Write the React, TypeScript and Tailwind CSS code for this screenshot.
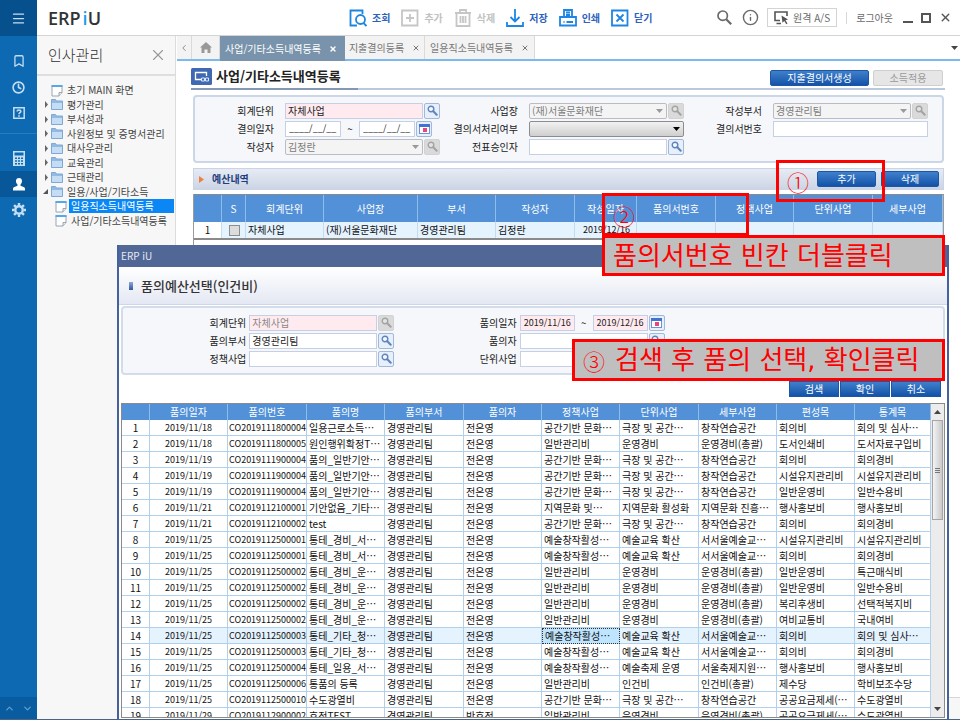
import React from "react";
import { Bookmark, Clock, Menu, X, Info, ChevronUp, ChevronDown, ChevronLeft } from "lucide-react";

/* ---------- icons ---------- */

function FolderIcon() {
  return (
    <svg width="12" height="11" viewBox="0 0 12 11" className="shrink-0" aria-hidden="true">
      <path d="M.5 10.500V.5h4l1 1.500h6v8.500z" fill="#8fbbe6" stroke="#7fa9d2" />
      <path d="M1 4h10v6H1z" fill="#c4ddf5" />
    </svg>
  );
}

function PageIcon() {
  return (
    <svg width="12" height="13" viewBox="0 0 12 13" className="shrink-0" aria-hidden="true">
      <path d="M1 1.500h10v7L8 12H1z" fill="#fff" stroke="#9aa4b0" />
      <path d="M.5 1h11v2H.5z" fill="#5aa7e6" />
      <path d="M11 8.500H8V12" fill="#e8ebef" stroke="#9aa4b0" />
    </svg>
  );
}

function LensIcon({ muted }: { muted?: boolean }) {
  const c = muted ? "#a3a3a3" : "#5f83bd";
  return (
    <svg width="11" height="11" viewBox="0 0 11 11" aria-hidden="true">
      <circle cx="4" cy="4" r="2.800" fill={muted ? "#e3e3e3" : "#f4f9ff"} stroke={c} strokeWidth="1.400" />
      <path d="M6.300 6.300L9.700 9.700" stroke={c} strokeWidth="2" strokeLinecap="round" />
    </svg>
  );
}

function CalendarIcon() {
  return (
    <svg width="11" height="10" viewBox="0 0 11 10" aria-hidden="true">
      <rect x=".5" y=".5" width="10" height="9" fill="#fff" stroke="#6f93d2" />
      <rect x="0" y="0" width="11" height="3" fill="#3f74d0" />
      <rect x="4" y="4" width="4" height="4" fill="#e8467c" />
    </svg>
  );
}

function Caret({ className }: { className: string }) {
  return (
    <svg width="7" height="4" viewBox="0 0 7 4" className={className} aria-hidden="true">
      <path d="M0 0h7L3.500 4z" fill="currentColor" />
    </svg>
  );
}

const toolIcons: Record<string, React.ReactNode> = {
  조회: (
    <>
      <path d="M8 16.500H1.500v-15h12V5" />
      <circle cx="11.500" cy="10.500" r="4.500" />
      <path d="M14.500 14l3 3" />
    </>
  ),
  추가: (
    <>
      <path d="M1 1.500h15.500v15H1z" />
      <path d="M9 5v8M5 9h8" />
    </>
  ),
  삭제: (
    <>
      <path d="M1 4h16M6 4V1h6v3M2.500 4v13h13V4M6.500 7v7M9 7v7M11.500 7v7" />
    </>
  ),
  저장: (
    <>
      <path d="M9 0v12M4.500 8L9 12.500 13.500 8M1 13v4h16v-4" />
    </>
  ),
  인쇄: (
    <>
      <path d="M5 8V1h8v7M1 8h16v8.500H1zM7 3.500h4M7 6h4M4.500 13h1M7.500 13H14" />
    </>
  ),
  닫기: (
    <>
      <path d="M1 1.500h15.500v15H1zM5.500 5.500l7 7M12.500 5.500l-7 7" />
    </>
  ),
};

/* ---------- shared controls ---------- */

function BlueButton({ children, className }: { children: React.ReactNode; className: string }) {
  return (
    <button
      type="button"
      className={
        "flex h-4 items-center justify-center border border-[#1d56a4] bg-linear-to-b from-[#3f80cc] to-[#1353a8] text-white " +
        className
      }
    >
      {children}
    </button>
  );
}

function SquareButton({ label, muted, children }: { label: string; muted?: boolean; children: React.ReactNode }) {
  return (
    <button
      type="button"
      aria-label={label}
      disabled={muted}
      className={
        "flex size-4 shrink-0 items-center justify-center rounded-xs border " +
        (muted ? "border-[#d2d2d2] bg-[#dadada]" : "border-[#9fb8dc] bg-[#e6effa]")
      }
    >
      {children}
    </button>
  );
}

function Field({
  id,
  label,
  gap,
  width,
  children,
}: {
  id: string;
  label: string;
  gap: string;
  width: string;
  children: React.ReactNode;
}) {
  return (
    <div className="flex h-[17px] items-center">
      <label htmlFor={id} className={"flex-1 text-right text-[#222] " + gap}>
        {label}
      </label>
      <div className={"flex items-center gap-px " + width}>{children}</div>
    </div>
  );
}

const inputBase = "h-4 min-w-0 border border-[#c5d0e6] leading-none";

function LookupInput({
  id,
  value = "",
  tone = "bg-white text-[#222]",
  muted,
}: {
  id: string;
  value?: string;
  tone?: string;
  muted?: boolean;
}) {
  return (
    <>
      <input id={id} defaultValue={value} className={inputBase + " flex-1 pl-0.5 " + tone} />
      <SquareButton label="찾기" muted={muted}>
        <LensIcon muted={muted} />
      </SquareButton>
    </>
  );
}

function DateRange({ id, from, to, tone }: { id: string; from: string; to: string; tone: string }) {
  const date = inputBase + " w-14 pl-[3px] text-[9px] text-[#222] " + tone;
  return (
    <>
      <input id={id} defaultValue={from} className={date} />
      <span className="w-4 text-center">~</span>
      <input aria-label="종료일자" defaultValue={to} className={date} />
      <SquareButton label="달력">
        <CalendarIcon />
      </SquareButton>
    </>
  );
}

function Combo({ id, value, box, caret }: { id: string; value: string; box: string; caret: string }) {
  return (
    <div className="relative flex-1">
      <select id={id} className={"block h-4 w-full appearance-none rounded-xs border pl-0.5 leading-none " + box}>
        <option>{value}</option>
      </select>
      <Caret className={"pointer-events-none absolute top-1.5 right-1 " + caret} />
    </div>
  );
}

function MutedCombo({ id, value }: { id: string; value: string }) {
  return (
    <>
      <Combo id={id} value={value} box="border-[#b9bcc2] bg-[#f4f4f4] text-[#7c7c7c]" caret="text-[#9a9a9a]" />
      <SquareButton label="찾기" muted>
        <LensIcon muted />
      </SquareButton>
    </>
  );
}

/* ---------- left rail and menu tree ---------- */

function Rail() {
  const item = "flex h-[26px] w-full items-center justify-center";
  return (
    <nav className="flex w-[37px] shrink-0 flex-col bg-[#0c69b2] text-[#c4def2]">
      <button type="button" aria-label="메뉴" className="flex h-9 items-center justify-center bg-[#06508d]">
        <Menu size={15} strokeWidth={2} />
      </button>
      <div className="mt-3 border-b border-[#2a7cbe] pb-[7px]">
        <button type="button" aria-label="즐겨찾기" className={item}>
          <Bookmark size={14} strokeWidth={2.2} />
        </button>
        <button type="button" aria-label="최근" className={item}>
          <Clock size={13} strokeWidth={3} />
        </button>
        <button type="button" aria-label="도움말" className={item}>
          <svg width="12" height="12" viewBox="0 0 12 12" fill="none" stroke="currentColor" aria-hidden="true">
            <path d="M.8.800h10.400v10.400H.8z" strokeWidth="1.500" />
            <path d="M4.200 4.600c0-2.200 3.600-2.200 3.600 0 0 1.200-1.800 1-1.800 2.600M6 8.300v1.400" strokeWidth="1.600" />
          </svg>
        </button>
      </div>
      <div className="pt-[11px]">
        <button type="button" aria-label="회계" className={item}>
          <svg width="12" height="15" viewBox="0 0 12 15" aria-hidden="true">
            <path
              fillRule="evenodd"
              fill="currentColor"
              d="M0 0h12v15H0zM1.500 1.500v3h9v-3zM2 6.500v1.500h2V6.500zm3 0v1.500h2V6.500zm3 0v1.500h2V6.500zM2 9.300v1.500h2V9.300zm3 0v1.500h2V9.300zm3 0v1.500h2V9.300zM2 12v1.500h2V12zm3 0v1.500h2V12zm3 0v1.500h2V12z"
            />
          </svg>
        </button>
        <button type="button" aria-label="인사" className={item + " bg-[#085899] text-white"}>
          <svg width="12" height="13" viewBox="0 0 12 13" fill="currentColor" aria-hidden="true">
            <path d="M6 0c4 0 3.500 5 1.500 6.500v1.300l3.700 1.500c.6.300.8.900.8 1.700v1.500H0V11c0-.8.2-1.400.8-1.700l3.700-1.500V6.500C2.500 5 2 0 6 0z" />
          </svg>
        </button>
        <button type="button" aria-label="설정" className={item}>
          <svg width="14" height="14" viewBox="0 0 14 14" fill="none" stroke="currentColor" aria-hidden="true">
            <circle cx="7" cy="7" r="3.700" strokeWidth="2.400" />
            <path
              d="M7 0v2.500M7 11.500V14M0 7h2.500M11.500 7H14M2.050 2.050l1.800 1.800M10.150 10.150l1.800 1.800M2.050 11.950l1.800-1.800M10.150 3.850l1.800-1.800"
              strokeWidth="2.400"
            />
          </svg>
        </button>
      </div>
      <div className="mt-auto flex h-[22px] items-center justify-around bg-[#085c9f] text-[#5c9dd0]">
        <ChevronUp size={11} strokeWidth={3} />
        <ChevronDown size={11} strokeWidth={3} />
      </div>
    </nav>
  );
}

const folders = ["평가관리", "부서성과", "사원정보 및 증명서관리", "대사우관리", "교육관리", "근태관리"];

function Sidebar() {
  const row = "flex items-center whitespace-nowrap";
  return (
    <aside className="w-[139px] shrink-0 border-r border-[#dcdcdc] bg-[#f7f7f7] text-[#444]">
      <div className="flex h-10 items-center justify-between border-b-2 border-[#dedede] pr-2 pl-[11px]">
        <h1 className="text-[15px] font-light text-[#333]">인사관리</h1>
        <button type="button" aria-label="닫기">
          <X size={18} strokeWidth={1.5} className="text-[#999]" />
        </button>
      </div>
      <ul className="mt-[7px] grid h-[145px] auto-rows-fr pl-1.5">
        <li className={row + " gap-1 pl-2"}>
          <PageIcon />
          초기 MAIN 화면
        </li>
        {folders.map((name) => (
          <li key={name} className={row}>
            <svg width="8" height="7" viewBox="0 0 8 7" className="shrink-0" aria-hidden="true">
              <path d="M2 0l3 3.500L2 7z" fill="#666" />
            </svg>
            <span className="flex items-center gap-1">
              <FolderIcon />
              {name}
            </span>
          </li>
        ))}
        <li className={row}>
          <svg width="8" height="7" viewBox="0 0 8 7" className="shrink-0" aria-hidden="true">
            <path d="M5 1v5H0z" fill="#555" />
          </svg>
          <span className="flex items-center gap-1">
            <FolderIcon />
            일용/사업/기타소득
          </span>
        </li>
        <li className={row + " pl-3"}>
          <PageIcon />
          <span className="mr-px ml-0.5 flex-1 bg-[#0a86f5] pl-0.5 leading-[14px] text-white">일용직소득내역등록</span>
        </li>
        <li className={row + " gap-1 pl-3"}>
          <PageIcon />
          사업/기타소득내역등록
        </li>
      </ul>
    </aside>
  );
}

/* ---------- top bar and tabs ---------- */

function TopBar() {
  const muted = ["추가", "삭제"];
  return (
    <header className="flex h-9 shrink-0 items-center border-b border-[#d4d4d4] bg-white">
      <div className="w-[312px] shrink-0 pl-[11px] font-['Open_Sans',sans-serif] text-lg font-semibold text-[#333]">
        ERP<span className="ml-0.5 text-[#18a0ee]">i</span>U
      </div>
      <div className="flex items-center gap-[11px] font-bold">
        {Object.entries(toolIcons).map(([name, icon]) => (
          <button
            key={name}
            type="button"
            className={
              "flex shrink-0 items-center gap-[5px] " + (muted.includes(name) ? "text-[#c2c2c2]" : "text-[#2f62bd]")
            }
          >
            <svg
              width="18"
              height="18"
              viewBox="0 0 18 18"
              fill="none"
              stroke={muted.includes(name) ? "#c6c6c6" : "#1c86e2"}
              strokeWidth="1.800"
              aria-hidden="true"
            >
              {icon}
            </svg>
            {name}
          </button>
        ))}
      </div>
      <div className="ml-auto flex items-center pr-2 text-[#6a6a6a]">
        <button type="button" aria-label="검색" className="mr-2.5">
          <svg width="15" height="15" viewBox="0 0 15 15" fill="none" stroke="currentColor" aria-hidden="true">
            <circle cx="5.700" cy="5.700" r="4.700" strokeWidth="1.700" />
            <path d="M9.200 9.200l5 5" strokeWidth="2.200" />
          </svg>
        </button>
        <button type="button" aria-label="정보" className="mr-2">
          <Info size={17} strokeWidth={2} />
        </button>
        <button type="button" className="flex h-[19px] w-[70px] items-center justify-center gap-1 border border-[#d4d4d4]">
          <svg width="15" height="14" viewBox="0 0 15 14" fill="none" stroke="#555" strokeWidth="1.600" aria-hidden="true">
            <path d="M6 9.500H1V1h12v4M2.500 12.500H7" />
            <path d="M7.500 4.500l6.500 4-2.500.7 2 3.300-1.200.7-2-3.300-1.800 1.800z" fill="#555" stroke="none" />
          </svg>
          원격 A/S
        </button>
        <span className="mx-[9px] h-3 w-px bg-[#d8d8d8]" />
        <button type="button">로그아웃</button>
        <button type="button" aria-label="최소화" className="ml-2.5 flex h-2.5 items-end">
          <span className="h-0.5 w-2.5 bg-[#555]" />
        </button>
        <button type="button" aria-label="최대화" className="mr-2 ml-2 h-2.5 w-2.5 border-2 border-[#555]" />
        <button type="button" aria-label="창 닫기">
          <X size={13} strokeWidth={2.6} className="text-[#555]" />
        </button>
      </div>
    </header>
  );
}

function Tabs() {
  const cell = "flex items-center justify-center border-r border-[#dadada] bg-[#f3f3f3]";
  return (
    <div className="flex h-[25px] shrink-0 border-b-2 border-[#7cb9ec] text-[#777]">
      <button type="button" aria-label="이전" className={cell + " w-[15px]"}>
        <ChevronLeft size={10} />
      </button>
      <button type="button" aria-label="홈" className={cell + " w-[28px]"}>
        <svg width="12" height="11" viewBox="0 0 12 11" aria-hidden="true">
          <path d="M6 0l6 5.500h-1.500V11H7.500V7.500h-3V11H1.500V5.500H0z" fill="#999" />
        </svg>
      </button>
      <button type="button" className="-mb-0.5 flex w-[125px] items-center justify-between bg-[#7893ab] pr-2 pl-[5px] text-white">
        사업/기타소득내역등록
        <X size={8} strokeWidth={4} />
      </button>
      <button type="button" className={cell + " w-20 gap-2"}>
        지출결의등록
        <X size={8} strokeWidth={3} />
      </button>
      <button type="button" className={cell + " w-[110px] gap-2"}>
        일용직소득내역등록
        <X size={8} strokeWidth={3} />
      </button>
      <Caret className="mt-2.5 mr-0.5 ml-auto text-[#444]" />
    </div>
  );
}

/* ---------- background form ---------- */

function TitleRow() {
  return (
    <div className="mr-[15px] ml-3.5 flex h-[29px] shrink-0">
      <h2 className="flex w-[167px] items-end gap-1 border-b-2 border-[#8497b4] pb-0.5 text-[13px] leading-[20px] font-bold whitespace-nowrap text-[#222]">
        <svg width="21" height="17" viewBox="0 0 21 17" className="mb-px shrink-0" fill="none" aria-hidden="true">
          <rect width="21" height="17" rx="1.500" fill="#3f69b3" />
          <path d="M10 11.500H4.500v-7h11V8" stroke="#fff" strokeWidth="1.300" />
          <path d="M10.500 10h3v3h-3zM14.500 10h3v3h-3z" stroke="#dce8fa" />
        </svg>
        사업/기타소득내역등록
      </h2>
      <div className="flex flex-1 items-end justify-end gap-1 border-b-2 border-[#b9c8dc] pr-0.5 pb-0.5">
        <BlueButton className="w-[99px] rounded-xs">지출결의서생성</BlueButton>
        <button type="button" disabled className="h-4 w-[70px] rounded-xs border border-[#cfcfcf] bg-[#e6e6e6] text-[#999]">
          소득적용
        </button>
      </div>
    </div>
  );
}

function VoucherFilter() {
  const g = "pr-[11px]";
  const w = "w-[155px]";
  return (
    <form className="mx-4 mt-[5px] grid shrink-0 grid-cols-3 gap-y-px rounded-sm border-2 border-[#cbd6e6] bg-[#f5f7fa] pt-[5px] pr-3.5 pb-1.5 pl-px">
      <Field id="acct" label="회계단위" gap={g} width={w}>
        <LookupInput id="acct" value="자체사업" tone="bg-[#ffebef] text-[#222]" />
      </Field>
      <Field id="biz" label="사업장" gap={g} width={w}>
        <MutedCombo id="biz" value="(재)서울문화재단" />
      </Field>
      <Field id="dept" label="작성부서" gap={g} width={w}>
        <MutedCombo id="dept" value="경영관리팀" />
      </Field>
      <Field id="date" label="결의일자" gap={g} width={w}>
        <DateRange id="date" from="____/__/__" to="____/__/__" tone="bg-white" />
      </Field>
      <Field id="state" label="결의서처리여부" gap={g} width={w}>
        <Combo id="state" value="" box="border-[#8d8d8d] bg-linear-to-b from-[#f2f2f2] to-[#cfcfcf]" caret="text-black" />
      </Field>
      <Field id="docno" label="결의서번호" gap={g} width={w}>
        <input id="docno" className={inputBase + " w-full bg-white pl-0.5"} />
      </Field>
      <Field id="writer" label="작성자" gap={g} width={w}>
        <MutedCombo id="writer" value="김정란" />
      </Field>
      <Field id="approver" label="전표승인자" gap={g} width={w}>
        <LookupInput id="approver" />
      </Field>
    </form>
  );
}

const budgetCols: [string, string][] = [
  ["", "w-7"],
  ["S", "w-6"],
  ["회계단위", "w-[78px]"],
  ["사업장", "w-[94px]"],
  ["부서", "w-[78px]"],
  ["작성자", "w-[79px]"],
  ["작성일자", "w-[62px]"],
  ["품의서번호", "w-[79px]"],
  ["정책사업", "w-[78px]"],
  ["단위사업", "w-[79px]"],
  ["세부사업", ""],
];

function BudgetGrid() {
  const td = "h-4 border-r border-[#c3dcf0] bg-[#e5f3ff] py-0 pl-0.5 whitespace-nowrap";
  return (
    <div className="mx-4 flex-1 border-x border-[#9a9a9a]">
      <table className="w-full table-fixed border-separate border-spacing-0 border-t border-b-2 border-[#8a8a8a]">
        <thead>
          <tr>
            {budgetCols.map(([name, w]) => (
              <th key={name} className={"h-[27px] border-r border-[#8fbdea] bg-[#5290d8] p-0 font-normal text-white " + w}>
                {name}
              </th>
            ))}
          </tr>
        </thead>
        <tbody className="text-[#111]">
          <tr>
            <td className="h-4 border-r border-[#c3dcf0] bg-white p-0 text-center">1</td>
            <td className={td}>
              <input
                type="checkbox"
                aria-label="선택"
                className="mx-auto block size-[11px] appearance-none border border-[#8d8d8d] bg-[#dcdcdc]"
              />
            </td>
            <td className={td}>자체사업</td>
            <td className={td}>(재)서울문화재단</td>
            <td className={td}>경영관리팀</td>
            <td className={td}>김정란</td>
            <td className={td + " text-center text-[9px]"}>2019/12/16</td>
            <td className={td} />
            <td className={td} />
            <td className={td} />
            <td className={td} />
          </tr>
        </tbody>
      </table>
    </div>
  );
}

/* ---------- budget selection window ---------- */

const approvalCols: [string, string][] = [
  ["", "w-7"],
  ["품의일자", "w-[78px]"],
  ["품의번호", "w-[79px]"],
  ["품의명", "w-[78px]"],
  ["품의부서", "w-[79px]"],
  ["품의자", "w-[78px]"],
  ["정책사업", "w-[78px]"],
  ["단위사업", "w-[79px]"],
  ["세부사업", "w-[78px]"],
  ["편성목", "w-[78px]"],
  ["통계목", ""],
];

const TEAM = "경영관리팀";
const NAME = "전은영";

const approvals: string[][] = [
  ["2019/11/18", "CO2019111800004", "일용근로소득…", TEAM, NAME, "공간기반 문화…", "극장 및 공간…", "창작연습공간", "회의비", "회의 및 심사…"],
  ["2019/11/18", "CO2019111800005", "원인행위확정T…", TEAM, NAME, "일반관리비", "운영경비", "운영경비(총괄)", "도서인쇄비", "도서자료구입비"],
  ["2019/11/19", "CO2019111900004", "품의_일반기안…", TEAM, NAME, "공간기반 문화…", "극장 및 공간…", "창작연습공간", "회의비", "회의경비"],
  ["2019/11/19", "CO2019111900004", "품의_일반기안…", TEAM, NAME, "공간기반 문화…", "극장 및 공간…", "창작연습공간", "시설유지관리비", "시설유지관리비"],
  ["2019/11/19", "CO2019111900004", "품의_일반기안…", TEAM, NAME, "공간기반 문화…", "극장 및 공간…", "창작연습공간", "일반운영비", "일반수용비"],
  ["2019/11/21", "CO2019112100001", "기안없음_기타…", TEAM, NAME, "지역문화 및…", "지역문화 활성화", "지역문화 진흥…", "행사홍보비", "행사홍보비"],
  ["2019/11/21", "CO2019112100002", "test", TEAM, NAME, "공간기반 문화…", "극장 및 공간…", "창작연습공간", "회의비", "회의경비"],
  ["2019/11/25", "CO2019112500001", "통테_경비_서…", TEAM, NAME, "예술창작활성…", "예술교육 확산", "서서울예술교…", "시설유지관리비", "시설유지관리비"],
  ["2019/11/25", "CO2019112500001", "통테_경비_서…", TEAM, NAME, "예술창작활성…", "예술교육 확산", "서서울예술교…", "회의비", "회의경비"],
  ["2019/11/25", "CO2019112500002", "통테_경비_운…", TEAM, NAME, "일반관리비", "운영경비", "운영경비(총괄)", "일반운영비", "특근매식비"],
  ["2019/11/25", "CO2019112500002", "통테_경비_운…", TEAM, NAME, "일반관리비", "운영경비", "운영경비(총괄)", "일반운영비", "일반수용비"],
  ["2019/11/25", "CO2019112500002", "통테_경비_운…", TEAM, NAME, "일반관리비", "운영경비", "운영경비(총괄)", "복리후생비", "선택적복지비"],
  ["2019/11/25", "CO2019112500002", "통테_경비_운…", TEAM, NAME, "일반관리비", "운영경비", "운영경비(총괄)", "여비교통비", "국내여비"],
  ["2019/11/25", "CO2019112500003", "통테_기타_청…", TEAM, NAME, "예술창작활성…", "예술교육 확산", "서서울예술교…", "회의비", "회의 및 심사…"],
  ["2019/11/25", "CO2019112500003", "통테_기타_청…", TEAM, NAME, "예술창작활성…", "예술교육 확산", "서서울예술교…", "회의비", "회의경비"],
  ["2019/11/25", "CO2019112500004", "통테_일용_서…", TEAM, NAME, "예술창작활성…", "예술축제 운영", "서울축제지원…", "행사홍보비", "행사홍보비"],
  ["2019/11/25", "CO2019112500006", "통품의 등록", TEAM, NAME, "일반관리비", "인건비", "인건비(총괄)", "제수당", "학비보조수당"],
  ["2019/11/25", "CO2019112500010", "수도광열비", TEAM, NAME, "공간기반 문화…", "극장 및 공간…", "창작연습공간", "공공요금제세(…", "수도광열비"],
  ["2019/11/29", "CO2019112900002", "호정TEST", TEAM, "박호정", "일반관리비", "운영경비", "운영경비(총괄)", "공공요금제세(…", "수도광열비"],
];

const SELECTED = 13;

function cellText(column: number) {
  if (column === 0) return "p-0 text-center text-[9px] ";
  if (column === 1) return "py-0 pr-0 pl-px text-[9px] ";
  return "py-0 pr-0 pl-0.5 ";
}

function ApprovalTable() {
  return (
    <div className="mx-0.5 mt-1.5 mb-px flex min-h-0 flex-1 overflow-hidden border border-[#8a8a8a] bg-white">
      <div className="min-w-0 flex-1">
        <table className="w-full table-fixed border-separate border-spacing-0">
          <thead>
            <tr>
              {approvalCols.map(([name, w]) => (
                <th key={name} className={"h-4 border-r border-[#8fbdea] bg-[#5290d8] p-0 font-normal text-white " + w}>
                  {name}
                </th>
              ))}
            </tr>
          </thead>
          <tbody className="text-[#111]">
            {approvals.map((cells, r) => (
              <tr key={r} className={r === SELECTED ? "bg-[#e5f3ff]" : "bg-white"}>
                <td className="h-4 border-r border-b border-[#b0d0ee] bg-white p-0 text-center">{r + 1}</td>
                {cells.map((text, c) => (
                  <td
                    key={c}
                    className={
                      "h-4 overflow-hidden whitespace-nowrap " +
                      cellText(c) +
                      (r === SELECTED && c === 5
                        ? "border border-dotted border-[#333] bg-[#bfe4fd]"
                        : "border-r border-b border-[#b0d0ee]")
                    }
                  >
                    {text}
                  </td>
                ))}
              </tr>
            ))}
          </tbody>
        </table>
      </div>
      <div className="flex w-[13px] shrink-0 flex-col items-center bg-[#ececec] text-[#444]">
        <Caret className="my-1.5 rotate-180" />
        <div className="flex h-[100px] w-[11px] shrink-0 flex-col items-center justify-center gap-px border border-[#a5a5a5] bg-linear-to-r from-[#f4f4f4] to-[#c9c9c9]">
          <span className="h-px w-[5px] bg-[#777]" />
          <span className="h-px w-[5px] bg-[#777]" />
          <span className="h-px w-[5px] bg-[#777]" />
        </div>
        <Caret className="mt-auto mb-1.5" />
      </div>
    </div>
  );
}

function BudgetWindow() {
  const g = "pr-[3px]";
  const w = "w-[145px]";
  return (
    <section className="absolute top-[245px] right-[11px] bottom-0 left-[117px] flex flex-col border-x-2 border-[#46629c] bg-white">
      <div className="h-[22px] shrink-0 bg-[#516897] pl-0.5 leading-[22px] text-[#e4e9f2]">ERP iU</div>
      <h2 className="flex h-[38px] shrink-0 items-center gap-2 border-b border-[#cfd6e8] bg-linear-to-b from-white to-[#e4e8f3] pl-2.5 text-[13px] font-medium text-[#333]">
        <span className="h-2 w-1 bg-linear-to-b from-[#8ba7dd] to-[#33579d]" />
        품의예산선택(인건비)
      </h2>
      <form className="mx-0.5 mt-px grid shrink-0 grid-cols-3 gap-y-px rounded-sm border-2 border-[#d3dcea] bg-[#f5f7fa] pt-1.5 pr-2 pb-1.5 pl-px">
        <Field id="m-acct" label="회계단위" gap={g} width={w}>
          <LookupInput id="m-acct" value="자체사업" tone="bg-[#ffebef] text-[#888]" muted />
        </Field>
        <Field id="m-date" label="품의일자" gap={g} width={w}>
          <DateRange id="m-date" from="2019/11/16" to="2019/12/16" tone="bg-[#ffebef]" />
        </Field>
        <span />
        <Field id="m-dept" label="품의부서" gap={g} width={w}>
          <LookupInput id="m-dept" value="경영관리팀" />
        </Field>
        <Field id="m-person" label="품의자" gap={g} width={w}>
          <LookupInput id="m-person" />
        </Field>
        <span />
        <Field id="m-policy" label="정책사업" gap={g} width={w}>
          <LookupInput id="m-policy" />
        </Field>
        <Field id="m-unit" label="단위사업" gap={g} width={w}>
          <LookupInput id="m-unit" />
        </Field>
      </form>
      <div className="mt-1.5 mr-1.5 flex shrink-0 justify-end gap-px">
        <BlueButton className="w-[50px]">검색</BlueButton>
        <BlueButton className="w-[50px]">확인</BlueButton>
        <BlueButton className="w-[50px]">취소</BlueButton>
      </div>
      <ApprovalTable />
    </section>
  );
}

/* ---------- red guide marks ---------- */

function GuideMarks() {
  const box = "absolute border-[3px] border-[#f00]";
  const note = "flex items-center whitespace-nowrap bg-[#bfbfbf] font-['DejaVu_Sans','Noto_Sans_CJK_KR',sans-serif] text-[26px] text-[#f00]";
  const num = "font-['Noto_Sans_CJK_KR',sans-serif] text-[22px] leading-[22px] font-light text-[#f00]";
  return (
    <>
      <div className={box + " top-[160px] left-[776px] flex h-[42px] w-[109px] items-center pl-2"}>
        <span className={num}>①</span>
      </div>
      <div className={box + " top-[193px] left-[602px] flex h-[43px] w-[147px] items-center pl-2"}>
        <span className={num}>②</span>
      </div>
      <div className={box + " top-[235px] left-[602px] h-[41px] w-[343px] pl-2 " + note}>품의서번호 빈칸 더블클릭</div>
      <div className={box + " top-[339px] left-[572px] h-[42px] w-[373px] gap-2.5 pl-2 " + note}>
        <span className={num}>③</span>
        검색 후 품의 선택, 확인클릭
      </div>
    </>
  );
}

export default function App() {
  return (
    <div
      lang="ko"
      className="relative flex h-screen overflow-hidden border-b border-[#4a6486] bg-white font-['Noto_Sans_CJK_KR',sans-serif] text-[10px] leading-[14px] text-[#222]"
    >
      <Rail />
      <div className="flex min-w-0 flex-1 flex-col">
        <TopBar />
        <div className="flex min-h-0 flex-1">
          <Sidebar />
          <main className="ml-px flex min-w-0 flex-1 flex-col">
            <Tabs />
            <TitleRow />
            <VoucherFilter />
            <div className="mx-4 mt-[5px] mb-1 flex h-[22px] shrink-0 items-center border border-[#c9d5e6] bg-linear-to-b from-[#e6ebf4] to-[#cdd5e5] pr-1">
              <svg width="5" height="7" viewBox="0 0 5 7" className="mr-2 ml-[5px]" aria-hidden="true">
                <path d="M0 0l5 3.500L0 7z" fill="#f0803c" />
              </svg>
              <h3 className="font-bold text-[#1f3f7c]">예산내역</h3>
              <div className="ml-auto flex gap-[5px]">
                <BlueButton className="w-[59px] rounded-xs">추가</BlueButton>
                <BlueButton className="w-[58px] rounded-xs">삭제</BlueButton>
              </div>
            </div>
            <BudgetGrid />
            <div className="h-[22px] shrink-0 border-t border-[#d6d6d6] bg-[#f7f7f7]" />
          </main>
        </div>
      </div>
      <BudgetWindow />
      <GuideMarks />
    </div>
  );
}
